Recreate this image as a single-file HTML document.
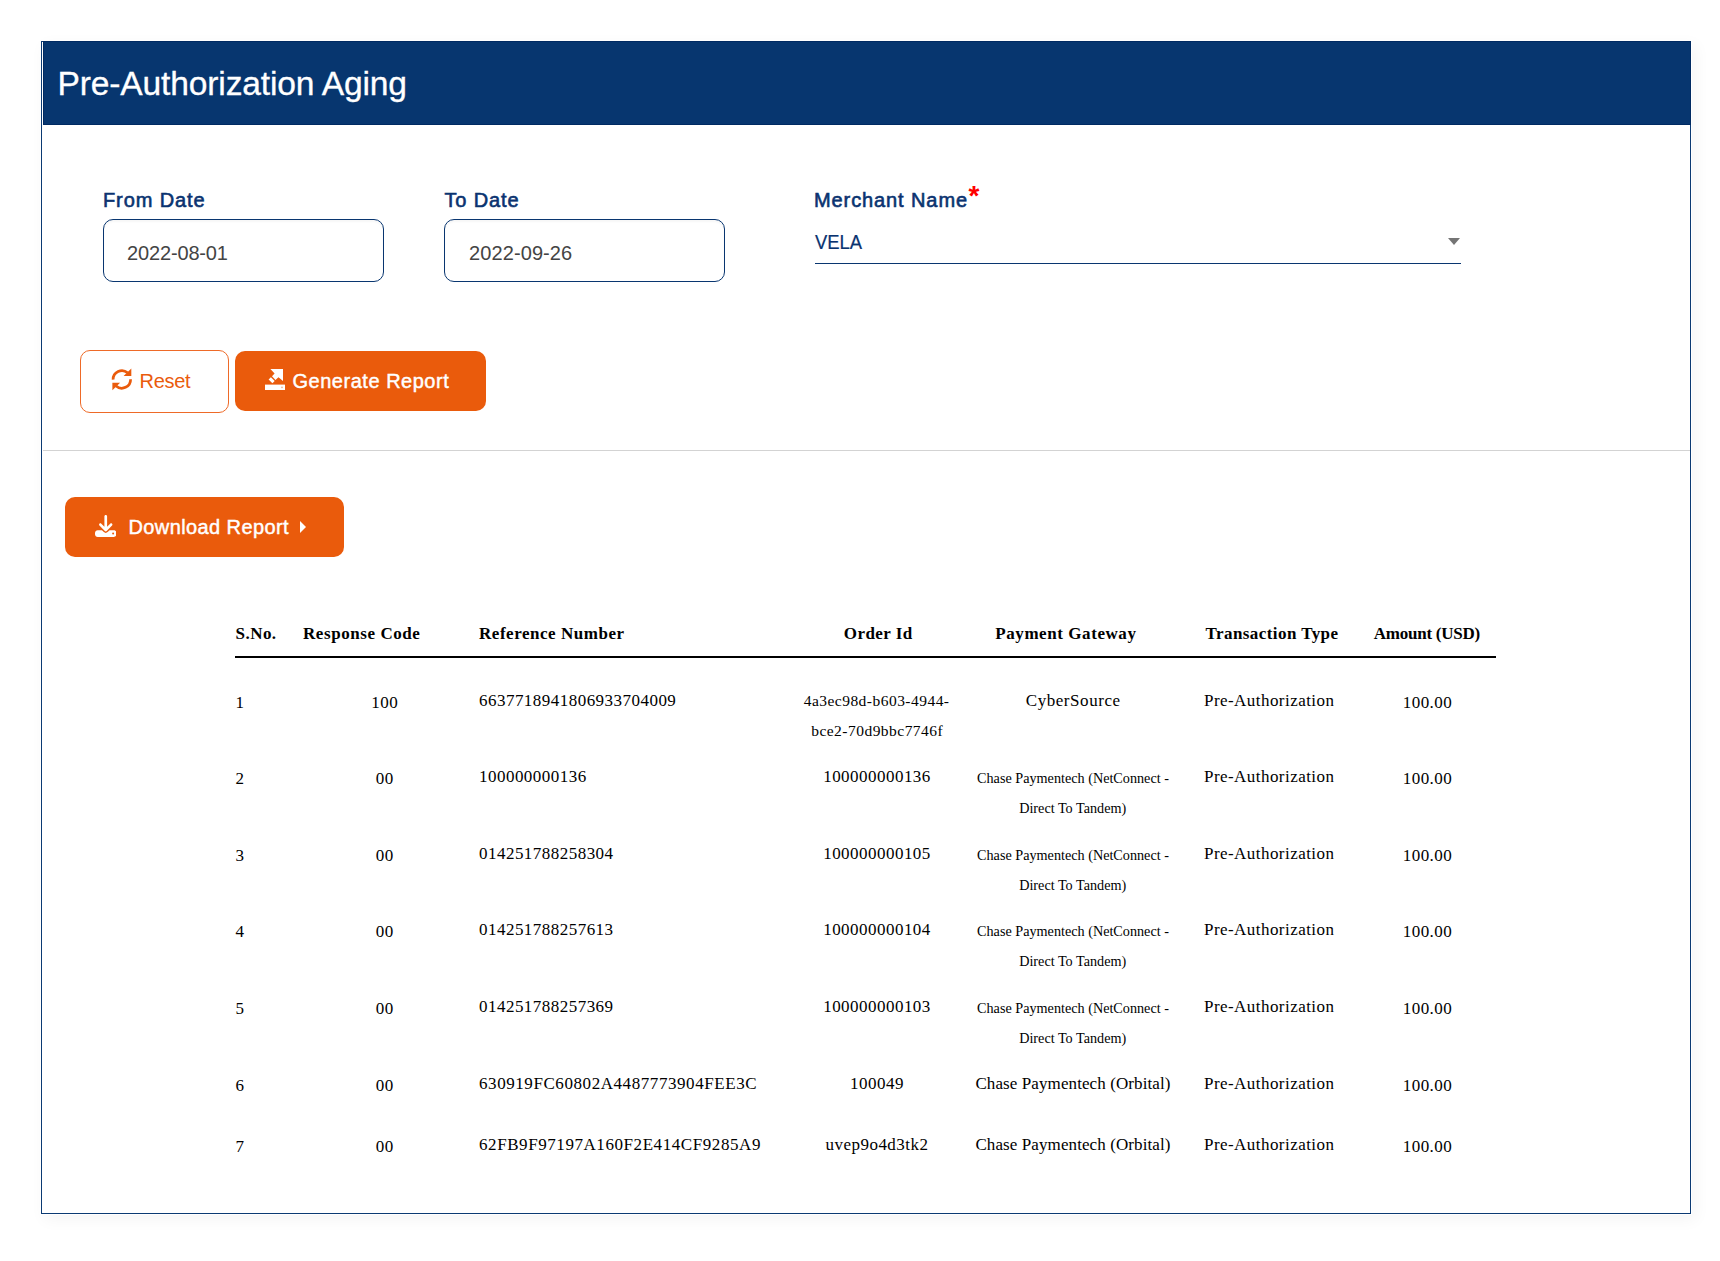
<!DOCTYPE html>
<html>
<head>
<meta charset="utf-8">
<style>
html,body{margin:0;padding:0;background:#fff;}
body{width:1720px;height:1261px;position:relative;overflow:hidden;font-family:"Liberation Sans",sans-serif;}
.card{position:absolute;left:41px;top:41px;width:1648px;height:1171px;border:1px solid #0b3a73;background:#fff;box-shadow:0 0 0 1px #fff,4px 5px 15px 1px rgba(0,0,0,0.045);}
.hdr{position:absolute;left:43px;top:41px;width:1646px;height:82px;background:#07366f;border:1px solid #002a62;}
.title{position:absolute;left:58px;top:0;line-height:0;color:#fff;font-size:33px;white-space:nowrap;}
.t{position:absolute;white-space:nowrap;line-height:0;}
.lbl{color:#0a3370;font-size:20px;-webkit-text-stroke:0.6px #0a3370;}
.inp{position:absolute;top:219px;width:279px;height:61px;border:1px solid #093670;border-radius:10px;background:#fff;box-shadow:inset 0 2px 2px rgba(0,0,0,0.035);}
.val{color:#444;font-size:20px;}
.sep{position:absolute;left:43px;top:450px;width:1647px;height:1px;background:#d3d3d3;}
.btn{position:absolute;border-radius:10px;}
.s{font-family:"Liberation Serif",serif;color:#000;}
.hd{font-weight:bold;font-size:18px;}
.d{font-size:18px;}
.c{text-align:center;width:400px;}
</style>
</head>
<body>
<div class="card"></div>
<div class="hdr"></div>
<div class="t title" style="left:57.5px;top:84px;font-size:33.6px;letter-spacing:-0.15px;-webkit-text-stroke:0.3px #fff;">Pre-Authorization Aging</div>

<!-- form -->
<div class="t lbl" style="left:103px;top:199.5px;letter-spacing:0.9px;">From Date</div>
<div class="inp" style="left:103px;"></div>
<div class="t val" style="left:127px;top:253px;letter-spacing:-0.15px;">2022-08-01</div>

<div class="t lbl" style="left:444.5px;top:199.5px;letter-spacing:0.85px;">To Date</div>
<div class="inp" style="left:444px;"></div>
<div class="t val" style="left:469px;top:253px;letter-spacing:0.1px;">2022-09-26</div>

<div class="t lbl" style="left:814px;top:199.5px;letter-spacing:0.9px;">Merchant Name</div>
<div class="t" style="left:968.5px;top:196px;color:#f00;font-size:28px;font-weight:bold;">*</div>
<div class="t" style="left:815px;top:242px;color:#0a3370;font-size:20px;-webkit-text-stroke:0.2px #0a3370;transform:scaleX(0.92);transform-origin:0 0;">VELA</div>
<div style="position:absolute;left:815px;top:263px;width:646px;height:1px;background:#093670;"></div>
<div style="position:absolute;left:1447.8px;top:238px;width:0;height:0;border-left:6.8px solid transparent;border-right:6.8px solid transparent;border-top:7px solid #757575;"></div>

<!-- buttons -->
<div class="btn" style="left:80px;top:350px;width:147px;height:61px;border:1px solid #ee6a28;"></div>
<div class="btn" style="left:235px;top:351px;width:251px;height:60px;background:#ea5b0c;"></div>
<svg style="position:absolute;left:0;top:0;" width="200" height="420"><g fill="none" stroke="#ea5b0c" stroke-width="2.7"><path d="M113.1 379.6A8.75 8.75 0 0 1 127.6 372.8"/><path d="M130.6 379.2A8.75 8.75 0 0 1 116.1 386.0"/></g><g fill="#ea5b0c"><polygon points="131.3,368.6 131.3,376.1 123.6,376.1"/><polygon points="112.4,390.3 112.4,382.7 120.1,382.7"/></g></svg>
<div class="t" style="left:139.5px;top:381px;color:#ea5b0c;font-size:20px;letter-spacing:-0.3px;">Reset</div>
<svg style="position:absolute;left:0;top:0;" width="500" height="600">
<polygon fill="#fff" points="270.4,369.1 283,369.1 283,381 278.5,377.2 275.5,380 272,376.2 274.6,373.4"/>
<polygon fill="#fff" points="268.6,379.6 270.9,377.2 274.7,381 272.4,383.2"/>
<rect x="265" y="384.6" width="20" height="5.4" fill="#fff"/>
<circle cx="282" cy="387.3" r="0.9" fill="#f5b08a"/>
</svg>
<div class="t" style="left:292.5px;top:381px;color:#fff;font-size:20px;-webkit-text-stroke:0.45px #fff;letter-spacing:0.52px;">Generate Report</div>

<div class="sep"></div>

<div class="btn" style="left:65px;top:497px;width:279px;height:60px;background:#ea5b0c;"></div>
<svg style="position:absolute;left:94.5px;top:515px;" width="21.5" height="22" viewBox="0 0 512 512" preserveAspectRatio="none"><path fill="#fff" d="M288 32c0-17.700-14.300-32-32-32s-32 14.300-32 32V274.700l-73.400-73.400c-12.500-12.500-32.800-12.500-45.300 0s-12.500 32.800 0 45.300l128 128c12.500 12.500 32.800 12.500 45.300 0l128-128c12.500-12.500 12.500-32.800 0-45.300s-32.800-12.500-45.300 0L288 274.700V32zM64 352c-35.300 0-64 28.700-64 64v32c0 35.300 28.700 64 64 64H448c35.300 0 64-28.700 64-64V416c0-35.300-28.700-64-64-64H346.500l-45.300 45.300c-25 25-65.500 25-90.500 0L165.500 352H64zm368 56a24 24 0 1 1 0 48 24 24 0 1 1 0-48z"/></svg>
<div class="t" style="left:128.5px;top:527px;color:#fff;font-size:20px;-webkit-text-stroke:0.45px #fff;letter-spacing:0.4px;">Download Report</div>
<div style="position:absolute;left:300px;top:520.8px;width:0;height:0;border-top:6.5px solid transparent;border-bottom:6.5px solid transparent;border-left:6.2px solid #fff;"></div>

<!-- table -->
<div style="position:absolute;left:235px;top:656px;width:1261px;height:2px;background:#000;"></div>
<div class="t s" style="top:634.06px;font-size:17px;font-weight:bold;left:235.50px;letter-spacing:0.47px;">S.No.</div>
<div class="t s" style="top:634.06px;font-size:17px;font-weight:bold;left:303.00px;letter-spacing:0.57px;">Response Code</div>
<div class="t s" style="top:634.06px;font-size:17px;font-weight:bold;left:479.00px;letter-spacing:0.53px;">Reference Number</div>
<div class="t s" style="top:634.06px;font-size:17px;font-weight:bold;left:578.20px;width:600px;text-align:center;letter-spacing:0.45px;">Order Id</div>
<div class="t s" style="top:634.06px;font-size:17px;font-weight:bold;left:765.90px;width:600px;text-align:center;letter-spacing:0.57px;">Payment Gateway</div>
<div class="t s" style="top:634.06px;font-size:17px;font-weight:bold;left:1205.50px;letter-spacing:0.43px;">Transaction Type</div>
<div class="t s" style="top:634.06px;font-size:17px;font-weight:bold;left:1126.90px;width:600px;text-align:center;letter-spacing:-0.25px;">Amount (USD)</div>
<div class="t s" style="top:702.66px;font-size:17px;left:235.50px;letter-spacing:0.47px;">1</div>
<div class="t s" style="top:702.66px;font-size:17px;left:84.70px;width:600px;text-align:center;letter-spacing:0.47px;">100</div>
<div class="t s" style="top:700.96px;font-size:17px;left:479.00px;letter-spacing:0.47px;">6637718941806933704009</div>
<div class="t s" style="top:701.47px;font-size:15.5px;left:576.60px;width:600px;text-align:center;letter-spacing:0.47px;">4a3ec98d-b603-4944-</div>
<div class="t s" style="top:731.47px;font-size:15.5px;left:577.20px;width:600px;text-align:center;letter-spacing:0.47px;">bce2-70d9bbc7746f</div>
<div class="t s" style="top:700.96px;font-size:17px;left:773.20px;width:600px;text-align:center;letter-spacing:0.55px;">CyberSource</div>
<div class="t s" style="top:700.96px;font-size:17px;left:1204.00px;letter-spacing:0.45px;">Pre-Authorization</div>
<div class="t s" style="top:702.66px;font-size:17px;left:1127.50px;width:600px;text-align:center;letter-spacing:0.47px;">100.00</div>
<div class="t s" style="top:779.16px;font-size:17px;left:235.50px;letter-spacing:0.47px;">2</div>
<div class="t s" style="top:779.16px;font-size:17px;left:84.70px;width:600px;text-align:center;letter-spacing:0.47px;">00</div>
<div class="t s" style="top:777.46px;font-size:17px;left:479.00px;letter-spacing:0.47px;">100000000136</div>
<div class="t s" style="top:777.46px;font-size:17px;left:577.00px;width:600px;text-align:center;letter-spacing:0.47px;">100000000136</div>
<div class="t s" style="top:778.41px;font-size:14.2px;left:773.00px;width:600px;text-align:center;">Chase Paymentech (NetConnect -</div>
<div class="t s" style="top:808.41px;font-size:14.2px;left:772.70px;width:600px;text-align:center;">Direct To Tandem)</div>
<div class="t s" style="top:777.46px;font-size:17px;left:1204.00px;letter-spacing:0.45px;">Pre-Authorization</div>
<div class="t s" style="top:779.16px;font-size:17px;left:1127.50px;width:600px;text-align:center;letter-spacing:0.47px;">100.00</div>
<div class="t s" style="top:855.66px;font-size:17px;left:235.50px;letter-spacing:0.47px;">3</div>
<div class="t s" style="top:855.66px;font-size:17px;left:84.70px;width:600px;text-align:center;letter-spacing:0.47px;">00</div>
<div class="t s" style="top:853.96px;font-size:17px;left:479.00px;letter-spacing:0.47px;">014251788258304</div>
<div class="t s" style="top:853.96px;font-size:17px;left:577.00px;width:600px;text-align:center;letter-spacing:0.47px;">100000000105</div>
<div class="t s" style="top:854.91px;font-size:14.2px;left:773.00px;width:600px;text-align:center;">Chase Paymentech (NetConnect -</div>
<div class="t s" style="top:884.91px;font-size:14.2px;left:772.70px;width:600px;text-align:center;">Direct To Tandem)</div>
<div class="t s" style="top:853.96px;font-size:17px;left:1204.00px;letter-spacing:0.45px;">Pre-Authorization</div>
<div class="t s" style="top:855.66px;font-size:17px;left:1127.50px;width:600px;text-align:center;letter-spacing:0.47px;">100.00</div>
<div class="t s" style="top:932.16px;font-size:17px;left:235.50px;letter-spacing:0.47px;">4</div>
<div class="t s" style="top:932.16px;font-size:17px;left:84.70px;width:600px;text-align:center;letter-spacing:0.47px;">00</div>
<div class="t s" style="top:930.46px;font-size:17px;left:479.00px;letter-spacing:0.47px;">014251788257613</div>
<div class="t s" style="top:930.46px;font-size:17px;left:577.00px;width:600px;text-align:center;letter-spacing:0.47px;">100000000104</div>
<div class="t s" style="top:931.41px;font-size:14.2px;left:773.00px;width:600px;text-align:center;">Chase Paymentech (NetConnect -</div>
<div class="t s" style="top:961.41px;font-size:14.2px;left:772.70px;width:600px;text-align:center;">Direct To Tandem)</div>
<div class="t s" style="top:930.46px;font-size:17px;left:1204.00px;letter-spacing:0.45px;">Pre-Authorization</div>
<div class="t s" style="top:932.16px;font-size:17px;left:1127.50px;width:600px;text-align:center;letter-spacing:0.47px;">100.00</div>
<div class="t s" style="top:1008.66px;font-size:17px;left:235.50px;letter-spacing:0.47px;">5</div>
<div class="t s" style="top:1008.66px;font-size:17px;left:84.70px;width:600px;text-align:center;letter-spacing:0.47px;">00</div>
<div class="t s" style="top:1006.96px;font-size:17px;left:479.00px;letter-spacing:0.47px;">014251788257369</div>
<div class="t s" style="top:1006.96px;font-size:17px;left:577.00px;width:600px;text-align:center;letter-spacing:0.47px;">100000000103</div>
<div class="t s" style="top:1007.91px;font-size:14.2px;left:773.00px;width:600px;text-align:center;">Chase Paymentech (NetConnect -</div>
<div class="t s" style="top:1037.91px;font-size:14.2px;left:772.70px;width:600px;text-align:center;">Direct To Tandem)</div>
<div class="t s" style="top:1006.96px;font-size:17px;left:1204.00px;letter-spacing:0.45px;">Pre-Authorization</div>
<div class="t s" style="top:1008.66px;font-size:17px;left:1127.50px;width:600px;text-align:center;letter-spacing:0.47px;">100.00</div>
<div class="t s" style="top:1085.76px;font-size:17px;left:235.50px;letter-spacing:0.47px;">6</div>
<div class="t s" style="top:1085.76px;font-size:17px;left:84.70px;width:600px;text-align:center;letter-spacing:0.47px;">00</div>
<div class="t s" style="top:1084.06px;font-size:17px;left:479.00px;letter-spacing:0.57px;">630919FC60802A4487773904FEE3C</div>
<div class="t s" style="top:1084.06px;font-size:17px;left:577.00px;width:600px;text-align:center;letter-spacing:0.47px;">100049</div>
<div class="t s" style="top:1084.06px;font-size:17px;left:773.00px;width:600px;text-align:center;letter-spacing:0.1px;">Chase Paymentech (Orbital)</div>
<div class="t s" style="top:1084.06px;font-size:17px;left:1204.00px;letter-spacing:0.45px;">Pre-Authorization</div>
<div class="t s" style="top:1085.76px;font-size:17px;left:1127.50px;width:600px;text-align:center;letter-spacing:0.47px;">100.00</div>
<div class="t s" style="top:1146.76px;font-size:17px;left:235.50px;letter-spacing:0.47px;">7</div>
<div class="t s" style="top:1146.76px;font-size:17px;left:84.70px;width:600px;text-align:center;letter-spacing:0.47px;">00</div>
<div class="t s" style="top:1145.06px;font-size:17px;left:479.00px;letter-spacing:0.57px;">62FB9F97197A160F2E414CF9285A9</div>
<div class="t s" style="top:1145.06px;font-size:17px;left:577.00px;width:600px;text-align:center;letter-spacing:0.47px;">uvep9o4d3tk2</div>
<div class="t s" style="top:1145.06px;font-size:17px;left:773.00px;width:600px;text-align:center;letter-spacing:0.1px;">Chase Paymentech (Orbital)</div>
<div class="t s" style="top:1145.06px;font-size:17px;left:1204.00px;letter-spacing:0.45px;">Pre-Authorization</div>
<div class="t s" style="top:1146.76px;font-size:17px;left:1127.50px;width:600px;text-align:center;letter-spacing:0.47px;">100.00</div>
</body>
</html>
